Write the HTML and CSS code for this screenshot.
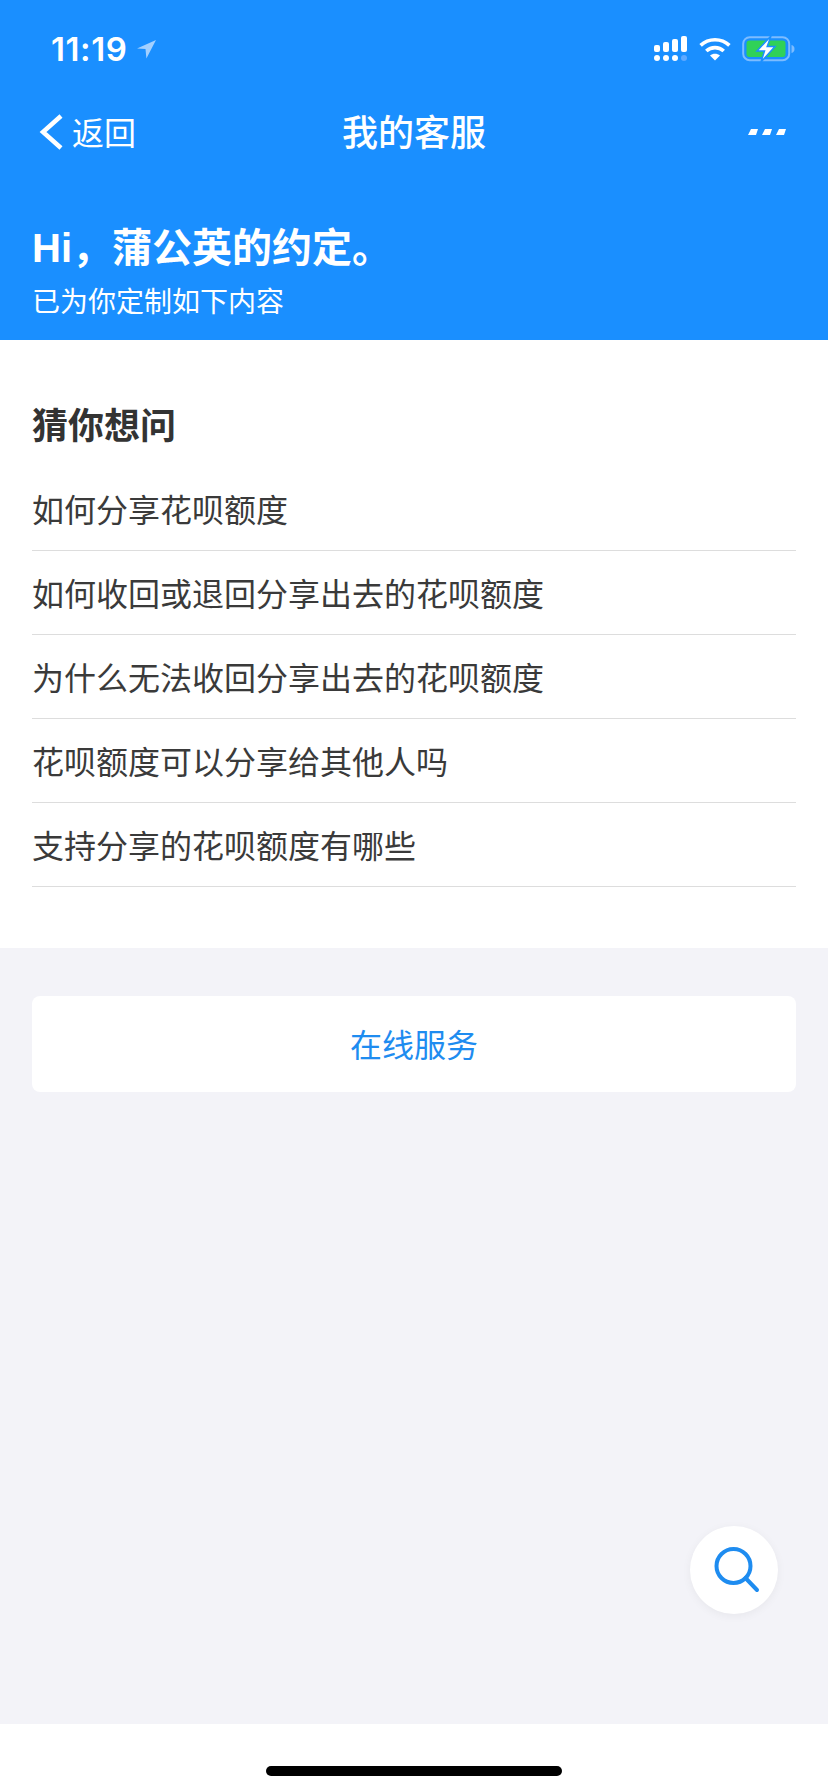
FILE: index.html
```html
<!DOCTYPE html>
<html lang="zh">
<head>
<meta charset="utf-8">
<title>我的客服</title>
<link rel="stylesheet" href="styles.css">
</head>
<body>
<div class="app">
  <header class="hero">
    <div class="status">
      <div class="status-left">
        <span class="time">11:19</span>
        <svg class="loc" width="20" height="20" viewBox="0 0 20 20"><path d="M20 1 1 9.500l8.500.6.9 9.400z" fill="#a3d0ff"/></svg>
      </div>
      <div class="status-right">
        <svg width="35" height="26" viewBox="0 0 35 26" fill="#fff">
          <rect x="1" y="9" width="6" height="7" rx="2"/><rect x="10" y="6" width="6" height="10" rx="2"/><rect x="19" y="3" width="6" height="13" rx="2"/><rect x="28" y="0" width="6" height="16" rx="2"/>
          <circle cx="4" cy="22" r="3"/><circle cx="13" cy="22" r="3"/><circle cx="22" cy="22" r="3"/><circle cx="31" cy="22" r="3" fill="#5fa9ff"/>
        </svg>
        <svg width="32" height="24" viewBox="0 0 32 24" fill="none" stroke="#fff" stroke-width="3.600">
          <path d="M1.600 8.400C9.500.9 22.500.9 30.400 8.400"/><path d="M7.300 14c4.800-4.500 12.600-4.500 17.400 0"/><path d="M16 23.500 11 18.500c2.800-2.300 7.200-2.300 10 0z" fill="#fff" stroke="none"/>
        </svg>
        <svg width="53" height="26" viewBox="0 0 53 26">
          <rect x="1.200" y="1.200" width="46" height="23" rx="6.500" fill="none" stroke="#7dbcff" stroke-width="2"/>
          <rect x="4.500" y="4.500" width="39" height="16.500" rx="3" fill="#30d158"/>
          <path d="M49.500 9c2 .6 3 2 3 4s-1 3.400-3 4z" fill="#7dbcff"/>
          <path d="M29 0 15 15h7.500L19 26 33 10.500h-7.800z" fill="#fff" stroke="#1a8fff" stroke-width="1.500"/>
        </svg>
      </div>
    </div>
    <nav class="nav">
      <div class="back">
        <svg width="26" height="36" viewBox="0 0 26 36" fill="none" stroke="#fff" stroke-width="4.500"><path d="M23 2 5 18l18 16"/></svg>
        <span>返回</span>
      </div>
      <h1 class="nav-title">我的客服</h1>
      <svg class="more" width="38" height="8" viewBox="0 0 38 8" fill="#fff">
        <path d="M3 1h7L8 7H0zM17 1h7l-2 6h-8zM31 1h7l-2 6h-8z"/>
      </svg>
    </nav>
    <div class="greeting">
      <div class="hi">Hi，蒲公英的约定。</div>
      <div class="sub">已为你定制如下内容</div>
    </div>
  </header>

  <main class="main">
    <section class="faq">
      <h2 class="faq-title">猜你想问</h2>
      <div class="faq-row">如何分享花呗额度</div>
      <div class="faq-row">如何收回或退回分享出去的花呗额度</div>
      <div class="faq-row">为什么无法收回分享出去的花呗额度</div>
      <div class="faq-row">花呗额度可以分享给其他人吗</div>
      <div class="faq-row">支持分享的花呗额度有哪些</div>
    </section>
    <div class="service">在线服务</div>
    <div class="fab">
      <svg class="fab-icon" width="48" height="48" viewBox="0 0 48 48" fill="none" stroke="#1e8cf0" stroke-width="4"><circle cx="20.500" cy="20" r="17"/><path d="M32.500 32 44 44" stroke-linecap="round"/></svg>
    </div>
  </main>

  <footer class="home"><span class="home-bar"></span></footer>
</div>
</body>
</html>
```

FILE: styles.css
```css
* { box-sizing: border-box; }
html, body { margin: 0; padding: 0; }
body {
  font-family: "Noto Sans CJK SC", "Noto Sans", sans-serif;
  background: #fff;
}
.app {
  width: 828px;
  height: 1792px;
  display: flex;
  flex-direction: column;
  overflow: hidden;
}
.hero {
  height: 340px;
  background: #1a8fff;
  color: #fff;
  flex: none;
}
.status {
  height: 88px;
  display: flex;
  justify-content: space-between;
  align-items: center;
  padding: 10px 33px 0 51px;
}
.status-left { display: flex; align-items: center; gap: 8px; }
.time {
  font-family: Inter, "Liberation Sans", sans-serif;
  font-size: 33px;
  font-weight: 600;
  letter-spacing: .6px;
  line-height: 40px;
}
.status-right { display: flex; align-items: center; gap: 11px; }
.nav {
  height: 88px;
  display: flex;
  align-items: center;
  justify-content: space-between;
  padding: 0 42px 0 38px;
  position: relative;
}
.back { display: flex; align-items: center; gap: 8px; font-size: 32px; line-height: 44px; }
.back span { position: relative; top: -1px; }
.nav-title {
  position: absolute;
  left: 0;
  right: 0;
  top: 17px;
  margin: 0;
  text-align: center;
  font-size: 36px;
  font-weight: 500;
  line-height: 50px;
}
.greeting { padding: 44px 32px 0; }
.hi {
  font-family: "Liberation Sans", "Noto Sans CJK SC", sans-serif;
  font-size: 40px;
  font-weight: 700;
  line-height: 56px;
}
.sub { font-size: 28px; line-height: 40px; margin-top: 4px; }
.main {
  flex: 1;
  background: #f3f3f8;
  position: relative;
}
.faq {
  background: #fff;
  height: 608px;
  padding: 0 32px;
}
.faq-title {
  margin: 0;
  height: 127px;
  padding-top: 54px;
  font-size: 36px;
  font-weight: 700;
  line-height: 58px;
  color: #333;
}
.faq-row {
  height: 84px;
  padding-top: 17px;
  font-size: 32px;
  line-height: 48px;
  color: #3a3a3a;
  border-bottom: 1px solid #ddd;
}
.service {
  margin: 48px 32px 0;
  height: 96px;
  border-radius: 8px;
  background: #fff;
  color: #1e8cf0;
  font-size: 32px;
  padding-bottom: 2px;
  display: flex;
  align-items: center;
  justify-content: center;
}
.fab {
  position: absolute;
  left: 690px;
  top: 1186px;
  width: 88px;
  height: 88px;
  border-radius: 50%;
  background: #fff;
  box-shadow: 0 2px 10px rgba(0, 0, 0, .05);
  display: flex;
  align-items: center;
  justify-content: center;
}
.fab-icon { transform: translateX(3px); }
.home {
  height: 68px;
  flex: none;
  background: #fff;
  display: flex;
  justify-content: center;
  padding-top: 42px;
}
.home-bar {
  width: 296px;
  height: 10px;
  border-radius: 5px;
  background: #000;
}
```
